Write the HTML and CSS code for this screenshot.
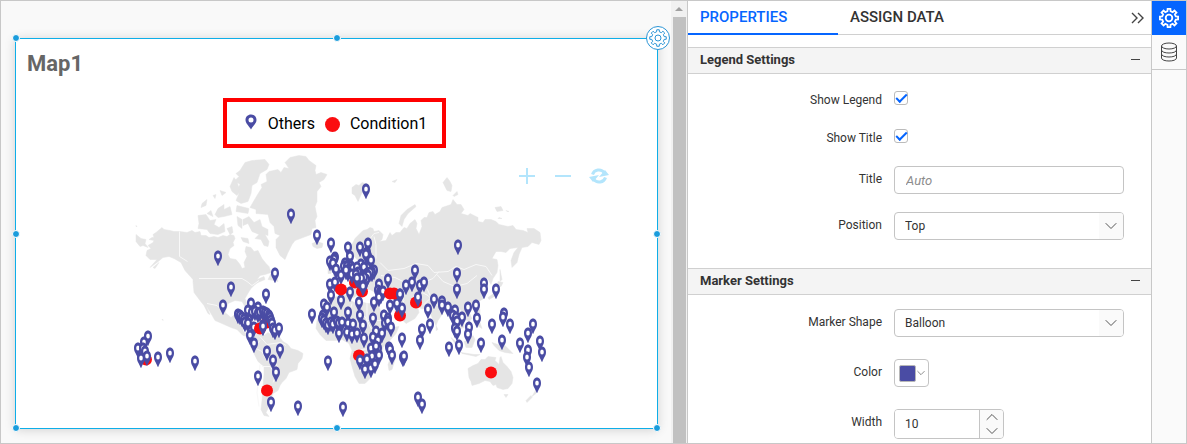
FILE: index.html
```html
<!DOCTYPE html>
<html lang="en">
<head>
<meta charset="utf-8">
<title>Map1</title>
<link rel="stylesheet" href="styles.css">
</head>
<body>
<svg class="sprite" aria-hidden="true">
  <symbol id="gear" viewBox="-12 -12 24 24"><path d="M7.4-1.7L9.9-1.5 9.9 1.5 7.4 1.7 6.4 4 8.1 5.9 5.9 8.1 4 6.4 1.7 7.4 1.5 9.9-1.5 9.9-1.7 7.4-4 6.4-5.9 8.1-8.1 5.9-6.4 4-7.4 1.7-9.9 1.5-9.9-1.5-7.4-1.7-6.4-4-8.1-5.9-5.9-8.1-4-6.4-1.7-7.4-1.5-9.9 1.5-9.9 1.7-7.4 4-6.4 5.9-8.1 8.1-5.9 6.4-4Z"/><circle r="3.6"/></symbol>
  <symbol id="chevron" viewBox="0 0 12 8"><path d="M.7 1.2L6 6.5l5.3-5.3"/></symbol>
</svg>
<div class="app">
  <main class="canvas">
    <section class="widget">
      <h1 class="widget-title">Map1</h1>
      <div class="legend">
        <svg class="legend-pin" viewBox="0 0 12 16"><path fill-rule="evenodd" d="M6 .5C2.800.5.500 2.800.5 6c0 3.600 3.800 6.200 5.500 9.500C7.700 12.200 11.500 9.600 11.500 6 11.500 2.800 9.200.5 6 .5ZM6 3.500a2.500 2.500 0 1 1 0 5 2.500 2.500 0 0 1 0-5Z"/></svg>
        <span>Others</span>
        <i class="legend-dot"></i>
        <span>Condition1</span>
      </div>
      <div class="map">
        <svg class="map-art" viewBox="16 148 641 279" role="img" aria-label="World map">
          <defs>
            <marker id="pin" markerUnits="userSpaceOnUse" markerWidth="10" markerHeight="18" refX="5" refY="7" orient="0">
              <path fill="#4a4ca4" d="M5 1C2.500 1 1 3.300 1 6.600 1 10.800 3.300 12 4.600 16.200H5.400C6.700 12 9 10.800 9 6.600 9 3.300 7.500 1 5 1Z"/>
              <ellipse cx="5" cy="6.500" rx="1.800" ry="2.600" fill="#fff"/>
            </marker>
            <marker id="dot" markerUnits="userSpaceOnUse" markerWidth="14" markerHeight="14" refX="7" refY="7"><circle cx="7" cy="7" r="6" fill="#fb0d10"/></marker>
          </defs>
          <g class="land">
            <path d="M152 237l2 0 -1-3 3-2 6-5 2 2 6 1 4 1 6 0 7 1 5-2 3 2 5-1 1 4 5 0 3 2 5-1 4 1 5-2 4 1 3-2 4 1 1 3-2 4 1 3-4 3-2 6 2 4 6 1 4 5 2 4 3-1-1-5 3-6-2-5 1-5 5 1 3 4 4-1 4 8 4 5 3 3 2 6-6 2-5 1-3 4 7-3 1 3-7 3-3 2-4 4-2 3-4 7 3 8-2 2-4-7-7-1-7 3-3 9 6 5 5-4 3 1-2 6 2 3 4 2 0 6 5 3 0 2-5-1-6-6-6-2-9-4-7-3-4-7-5-8 4 9-2-1-4-8-4-5-6-8-1-11 0-2-8-9-4-8-7-4-5-2-6 1-6 5-7 5 7-8-7 0-4-4 1-5 4-2-3-3 5-3 1-2-5-1Z"/>
            <path d="M136 234l5 4 5 1-1 4 3 4-5-2-3 1-4-5ZM153 267l6-5-4 6ZM190 266l6 8-3 0ZM136 225l1 1-1 0Z"/>
            <path d="M257 195l5-8-1-3 6-3-1-7 3-3 9-2 3 3 3-5 5 1-4-6 5-5 9-2 7 1 3 4 7 5-1 5 1 4 5-2 6 2-3 5-5 3 2 4-4 5 0 10-2 5 2 10-2 4 1 7-4 1-1 6-8 3-8 3-3 4-4 8-3 7-5-4-4-8 0-8 4-4-5-2-1-7-4-4-2-8-12-1 0-4-6-2Z"/>
            <path d="M236 173l4-3 5-8 7-2 13-1 4 5-2 5-7 4-3 9-5 3-1 8-3 8-7 2-5-3 3-7-1-5 2-4-5-4 4-4ZM234 177l3 4 3 10-3 4-5-4-2-5ZM237 205l12 3-1 5-12-2ZM218 208l6-4 0 5 6-3 2 8-8 2-6 1-3-3ZM198 215l8-1 4 6 6-1-2 5 5 3 5-4 1 8-7 3-8-1-3-4-9-1 1-5ZM202 203l5-4-1 6-5 2ZM220 190l6 2-4 3ZM213 195l3-1-1 4ZM207 213l4-3 2 6ZM227 228l5-2 1 6-3 2ZM237 216l5 3 0 9-4-3ZM243 219l6-3 5 6 6-3 2 7 6 3 0 6-3-1 4 7-1 5-4-1-3-6-6-1 4-4-7-3-4-8-5 2ZM241 237l7 1 1 5-6-2Z"/>
            <path d="M268 279l3-6 6 4 1 4-4-1ZM312 243l5-2 6 2-1 4-5 1-4-2ZM251 317l8 1 4 3-6-1ZM264 321l5 0 1 2-5 1ZM162 319l1 0 0 1Z"/>
            <path d="M254 342l-1-4 4-5 7 2 4-3 4 3 7 1 4 5 5 3 3 4 7 2 5 3-1 5-4 5-1 6-8 3-3 6-4 4-2 3-2 5-5 3-2 5-2 4-1 6-2 4 3 4-5-1-3-6 1-9 1-14 1-12 0-8-6-5-6-12Z"/>
            <path d="M325 302l7-5 17-3 3 2-1 4 5 3 5-2 6 2 8 0 3 0 3 9 5 10 5 5 8-1-3 7-7 8-6 6-1 8-3 7-5 7-3 8-6 6-6 0-4-7-3-10-2-8 2-8-3-7-7-4-7 1-9 0-6-6-4-6 1-8ZM395 350l1 6-4 13-3 1-1-6 3-8Z"/>
            <path d="M349 250l6-12 8-8 4-1 3-2 3 1 1 3 5-1 4 4-1 5-3 2 7-1 2-4 2-4 2 3 4-3 4 0 4-5 3 1 3-5 5-4 2 4-1 5 3 6 3-8-1-6 3-3 3 0 2-5 4-1 2 3 5-3 2-4 9-3 2-5 4 5 4 0 3 5-3 4 7 2 2-2 8 4 0 4 5 1 2-3 6 0 5 2 3 3 9 2 5-1 3 4 7 1 5 2-1-4 7 0 6 4 1 8-2 4-7-2-4 4-6 1-3 7-2 8-5 5-1-7 3-8 4-5-8 1-4 4-5-1-5 0-4 7 5 1 1 6-1 7-4 6-2 6-4-7-4 5 2 8 0 7-6 4-8 2-3 6 4 9-3 3-5-3 0 9-3 1-4-13-3-8-5 0-3 1-8 12-2 5-4-8-3-8-8-1-8-5 5 5 1 4-4 6-9 5-5-5-6-14 0-8-5-2-6-1-4-4-3 4-7-4-8 0-4 5-4 3-6-1 0-8 6-2 3-7 8-2 1-8Z"/>
            <path d="M333 263l5 2 4 9-9 1 2-5ZM328 268l4 0-1 5-3 0ZM352 187l4-3 3 1 3-3 6 2-5 6-5 11-3-6-3-2ZM399 223l2-8 6-6 8-5 1 2-8 7-4 6-2 7ZM443 182l4-5 3 4 2 4-1 6-4-1ZM453 195l4-4 1 3-4 2ZM495 207l6-1 2 4-6 1ZM506 210l3 1-2 0ZM392 181l5-2-2 3ZM499 217l3 1-4 0Z"/>
            <path d="M500 269l2 10-2 2ZM498 281l5 1-2 4-4 0ZM499 287l-3 8-7 4-1-2 7-5ZM477 309l3 0 0 7-3-1ZM476 318l4 4 2 6-5-3ZM436 325l2 4-2 1ZM451 337l7 6 4 7-4-2ZM461 352l13 2 6 0-4 2-14-3ZM464 341l5-2 4-4 2 4-3 8-6 0ZM477 341l6-1-3 3 2 5-4-1ZM492 342l6 2 7 1 5 5 3 3-8-1-6-2-5-5Z"/>
            <path d="M468 368l5-3 5-2 3-4 4 0 3-3 8 1-1 3 4 4 1-7 1-1 2 6 4 4 4 5 2 6-1 6-4 5-5 1-6-2-1-3-3 1-3-4-5-1-6 3-7 2-1-4-2-4ZM504 394l4 0-2 3ZM536 389l0 4-4 3ZM531 395l1 2-5 5-1-2Z"/>
          </g>
          <path class="borders" d="M179.500 231v25l8 5M199 278h43l5 3 5 4 7-5M207 303l10 2 8 8M235 319l6 5M260 340l-6 7 8 4 4 8 6-2 6 10-5 6M260 336l7 8 14-2 5 3M260 364l-3 28 2 14M262 366l8 0 6 8-3 8M364 249l4-8 6-8 5-1M376 258v-14l-2-8M326 303l12 12M352 303l-4 14-10 6M367 303v17h15M355 320l10-4 6 12 14-2M357 338l14-4 8 10M356 350l14-2 2 12 10-4M360 370l12-6 6 6M380 262l8 8 16-2 12-5 12 2 6 7 14-1 8-5 8 3 12-5 10 2 6 9M381 275l14 2 10 5 8-5 10 5 10-4 6-7M437 274l6 7 12 5 12-3 10-8M420 291l8 4 8 9 8 3M423 305l8-8-4-9M398 291l6 9-4 8-12 4M446 309l6-6M460 309l4 8"/>
          <polyline class="dots" points="146,359 267,322 267,390 400,315 416,302 359,355 491,372 355,282 362,291"/>
          <polyline class="pins" points="366,189 291,214 317,235 331,243 218,256 275,273 231,287 266,294 223,305 251,303 258,307 248,310 238,314 240,315 242,317 244,319 245,322 248,323 252,312 255,311 258,313 260,312 263,311 265,312 267,313 269,315 270,317 271,320 272,323 254,327 250,335 254,343 263,325 273,328 275,330 279,328 267,351 273,360 280,349 276,372 258,376 271,402 298,406 195,361 170,353 158,357 148,336 144,342 138,348 143,348 145,351 141,358 147,356 328,361 312,314"/>
          <polyline class="pins" points="368,243 348,247 360,247 367,252 350,256 368,256 366,254 335,257 334,259 330,261 333,263 371,260 336,269 345,263 344,266 347,266 351,266 349,269 353,268 361,264 357,267 364,267 341,275 374,270 372,272 367,273 361,275 358,272 348,272 346,270 352,274 356,274 370,272 368,275 359,279 362,282 364,284 366,279 364,277 361,278 357,278 363,286 388,279 415,270 330,284 335,282 331,295 341,300 350,292 324,304 327,307 334,312 348,312 359,302 374,302 360,315 373,318 323,315 322,318 324,320 326,323 328,325 331,322 333,324 337,321 339,323 342,322 339,333 348,323 347,332 353,324 352,334 357,333 363,325 364,338 376,331 373,337 382,333 378,340 384,315 388,318 385,323 388,321 391,327 371,348 378,348 376,346 379,355 372,356 367,359 360,360 365,369 371,368 375,364 389,347 390,349 392,355 402,338 403,357 404,356"/>
          <polyline class="pins" points="422,329 420,340 430,324 428,309 434,299 418,297 420,285 424,282 412,282 406,285 400,294 402,308 390,305 397,303 379,284 378,290 380,292 381,294 379,297 383,291 343,407 418,397 422,404 458,245 457,273 457,289 484,283 484,289 496,289 442,301 442,305 448,307 455,310 453,315 456,317 462,317 457,321 455,328 457,331 468,307 476,305 477,318 469,327 468,334 459,345 449,347 481,343 492,324 504,313 503,317 510,324 502,340 520,343 528,333 533,324 540,341 542,352 528,350 527,357 529,367 537,383"/>
          <polyline class="dots" points="341,289 390,293 394,293 260,328"/>
          <polyline class="pins" points="400,294 263,326"/>
        </svg>
        <div class="map-tools">
          <button type="button" aria-label="Zoom in"><svg viewBox="0 0 20 20"><path d="M2 10h16M10 2v16"/></svg></button>
          <button type="button" aria-label="Zoom out"><svg viewBox="0 0 20 20"><path d="M2 10h16"/></svg></button>
          <button type="button" aria-label="Reset"><svg viewBox="0 0 20 20"><path class="thick" d="M3.500 8.500C5 3.500 12 2 15.500 7M16.500 11.500C15 16.500 8 18 4.500 13"/><path class="solid" d="M20 9l-10 2 6-7ZM0 11l10-2-6 7Z"/></svg></button>
        </div>
      </div>
      <i class="handle top left"></i><i class="handle top center"></i>
      <i class="handle middle left"></i><i class="handle middle right"></i>
      <i class="handle bottom left"></i><i class="handle bottom center"></i><i class="handle bottom right"></i>
      <button type="button" class="widget-gear" aria-label="Widget settings"><svg><use href="#gear"/></svg></button>
    </section>
  </main>
  <div class="scrollbar"><i class="scroll-up"></i><i class="scroll-thumb"></i></div>
  <aside class="panel">
    <nav class="tabs">
      <button type="button" class="tab active">PROPERTIES</button>
      <button type="button" class="tab">ASSIGN DATA</button>
      <button type="button" class="collapse" aria-label="Collapse panel"><svg viewBox="0 0 14 12"><path d="M1 1l5 5-5 5M7 1l5 5-5 5"/></svg></button>
    </nav>
    <h2 class="section-head">Legend Settings<button type="button" aria-label="Collapse Legend Settings"></button></h2>
    <div class="fields">
      <div class="field check"><label for="show-legend">Show Legend</label><input id="show-legend" type="checkbox" checked></div>
      <div class="field check"><label for="show-title">Show Title</label><input id="show-title" type="checkbox" checked></div>
      <div class="field"><label for="title">Title</label><input id="title" class="box" type="text" placeholder="Auto"></div>
      <div class="field"><label for="position">Position</label><div class="select box"><select id="position"><option>Top</option></select><span class="arrow"><svg><use href="#chevron"/></svg></span></div></div>
    </div>
    <h2 class="section-head">Marker Settings<button type="button" aria-label="Collapse Marker Settings"></button></h2>
    <div class="fields roomy">
      <div class="field"><label for="shape">Marker Shape</label><div class="select box"><select id="shape"><option>Balloon</option></select><span class="arrow"><svg><use href="#chevron"/></svg></span></div></div>
      <div class="field"><label for="color">Color</label><button id="color" type="button" class="color box"><i class="swatch"></i><svg><use href="#chevron"/></svg></button></div>
      <div class="field"><label for="width">Width</label><div class="spinner box"><input id="width" type="number" value="10"><div class="steps"><button type="button" aria-label="Increase"><svg class="flip"><use href="#chevron"/></svg></button><button type="button" aria-label="Decrease"><svg><use href="#chevron"/></svg></button></div></div></div>
    </div>
  </aside>
  <nav class="rail">
    <button type="button" class="rail-item active" aria-label="Properties"><svg><use href="#gear"/></svg></button>
    <button type="button" class="rail-item" aria-label="Data"><svg viewBox="0 0 18 20"><ellipse cx="9" cy="4" rx="7.500" ry="3"/><path d="M1.500 4v12c0 4 15 4 15 0V4M1.500 8c0 4 15 4 15 0M1.500 12c0 4 15 4 15 0"/></svg></button>
  </nav>
</div>
</body>
</html>
```
FILE: styles.css
```css
* { box-sizing: border-box; }
body { margin: 0; font-family: Roboto, "Liberation Sans", sans-serif; font-size: 12px; color: #333; }
button, input, select { font: inherit; color: inherit; }
button { padding: 0; border: 0; background: none; cursor: pointer; }
svg { display: block; fill: none; }
.sprite { position: absolute; width: 0; height: 0; }

.app { display: flex; height: 100vh; border: 1px solid #c8c8c8; background: #fff; overflow: hidden; }
.canvas { flex: 1; min-width: 0; display: flex; padding: 37px 13px 14px 14px; background: #f9f9f9; }

.widget { position: relative; flex: 1; min-width: 0; display: flex; flex-direction: column; align-items: center; border: 1px solid #0eaee8; background: #fff; box-shadow: 0 1px 10px rgba(0, 0, 0, .16); }
.widget-title { align-self: stretch; margin: 13px 11px 22px; font-size: 22px; line-height: 24px; font-weight: 700; color: #666; }
.legend { display: flex; align-items: center; height: 50px; margin-right: 4px; padding: 2px 15px 0 18px; border: 4px solid #f00; font-size: 16px; line-height: 20px; color: #000; }
.legend-pin { width: 12px; height: 16px; margin: 0 11px 4px 0; fill: #4a4ca4; }
.legend-dot { width: 15px; height: 15px; margin: 0 10px; border-radius: 50%; background: #fb0d10; }

.map { position: relative; flex: 1; min-height: 0; align-self: stretch; }
.map-art { width: 100%; height: 100%; }
.land { fill: #e5e5e5; stroke: #e5e5e5; stroke-width: .5; stroke-linejoin: round; }
.borders { stroke: #f8f8f8; }
.pins { marker: url(#pin); }
.dots { marker: url(#dot); }
.map-tools { position: absolute; top: 18px; right: 48px; display: flex; gap: 16px; }
.map-tools svg { width: 20px; height: 20px; stroke: #b3e5fc; stroke-width: 2; }
.map-tools .thick { stroke-width: 3; }
.map-tools .solid { fill: #b3e5fc; stroke: none; }

.handle { position: absolute; width: 8px; height: 8px; border: 1px solid #fff; border-radius: 50%; background: #1a9cdc; }
.top { top: -5px; }
.middle { top: calc(50% - 4px); }
.bottom { bottom: -4px; }
.left { left: -4px; }
.center { left: calc(50% - 4px); }
.right { right: -4px; }
.widget-gear { position: absolute; top: -13px; right: -13px; width: 24px; height: 24px; display: grid; place-items: center; border: 1px solid #2b95d6; border-radius: 50%; background: #fff; }
.widget-gear svg { width: 20px; height: 20px; stroke: #2b95d6; stroke-width: 1.2; }

.scrollbar { display: flex; flex-direction: column; align-items: center; width: 16px; background: #f1f1f1; }
.scroll-up { margin: 6px 0; border: 4px solid transparent; border-top: 0; border-bottom-color: #a0a0a0; }
.scroll-thumb { flex: 1; width: 13px; background: #c1c1c1; }

.panel { width: 465px; border: solid #c8c8c8; border-width: 0 1px; }
.tabs { display: flex; height: 34px; margin-bottom: 12px; border-bottom: 1px solid #d0d0d0; }
.tab { height: 34px; padding: 0 12px 3px; text-align: left; font-size: 15px; font-weight: 500; }
.tab.active { width: 150px; padding-bottom: 1px; border-bottom: 2px solid #0565ff; color: #0565ff; }
.collapse { margin: 0 6px 0 auto; }
.collapse svg { width: 14px; height: 12px; stroke: #444; stroke-width: 1.4; }
.section-head { display: flex; align-items: center; justify-content: space-between; height: 27px; margin: 0; padding: 0 11px 2px 12px; border: solid #d0d0d0; border-width: 1px 0; background: #f4f4f4; font-size: 13px; font-weight: 700; }
.section-head button { width: 9px; height: 1px; background: #444; }

.fields { display: grid; gap: 18px; padding: 16px 27px 28px 0; }
.fields.roomy { gap: 22px; padding-top: 14px; }
.field { display: grid; grid-template-columns: 1fr 230px; column-gap: 12px; line-height: 26px; }
.field label { text-align: right; }
.check { line-height: 20px; }
.check input { appearance: none; display: grid; place-items: center; width: 14px; height: 14px; margin: 1px 0 0; border: 1px solid #bbb; border-radius: 3px; background: #fff; }
.check input:checked::after { content: ""; width: 9px; height: 4px; margin-bottom: 3px; border: solid #0565ff; border-width: 0 0 2px 2px; transform: rotate(-45deg); }
.box { height: 28px; border: 1px solid #c4c4c4; border-radius: 4px; background: #fff; }
input.box { width: 100%; padding: 0 11px; outline: 0; font-size: 13px; }
.box::placeholder { color: #8c8c8c; font-style: italic; }
.select { display: grid; grid-template-columns: 1fr 24px; overflow: hidden; }
.select select { grid-area: 1 / 1 / 2 / 3; appearance: none; padding: 0 10px; border: 0; background: none; outline: 0; }
.arrow { grid-area: 1 / 2; display: grid; place-items: center; background: #fafafa; pointer-events: none; }
.box svg { width: 12px; height: 8px; stroke: #555; }
.color { display: flex; align-items: center; width: 35px; padding-left: 4px; gap: 1px; }
.color .swatch { width: 17px; height: 17px; border: 1px solid #b8b8b8; border-radius: 2px; background: #4a4ca4; }
.color svg { width: 8px; height: 6px; }
.spinner { display: flex; width: 110px; height: 30px; overflow: hidden; }
.spinner input { flex: 1; min-width: 0; padding: 0 10px; border: 0; outline: 0; appearance: textfield; }
.spinner input::-webkit-inner-spin-button { appearance: none; margin: 0; }
.steps { display: grid; width: 24px; border-left: 1px solid #c4c4c4; background: #fafafa; }
.steps button { display: grid; place-items: center; }
.steps .flip { transform: rotate(180deg); }

.rail { width: 34px; background: #fafafa; }
.rail-item { display: grid; place-items: center; width: 100%; height: 35px; border-bottom: 1px solid #c8c8c8; }
.rail-item svg { width: 18px; height: 20px; stroke: #444; }
.rail-item.active { height: 34px; border: 0; background: #0565ff; }
.rail-item.active svg { width: 22px; height: 22px; stroke: #fff; stroke-width: 2; }
```
